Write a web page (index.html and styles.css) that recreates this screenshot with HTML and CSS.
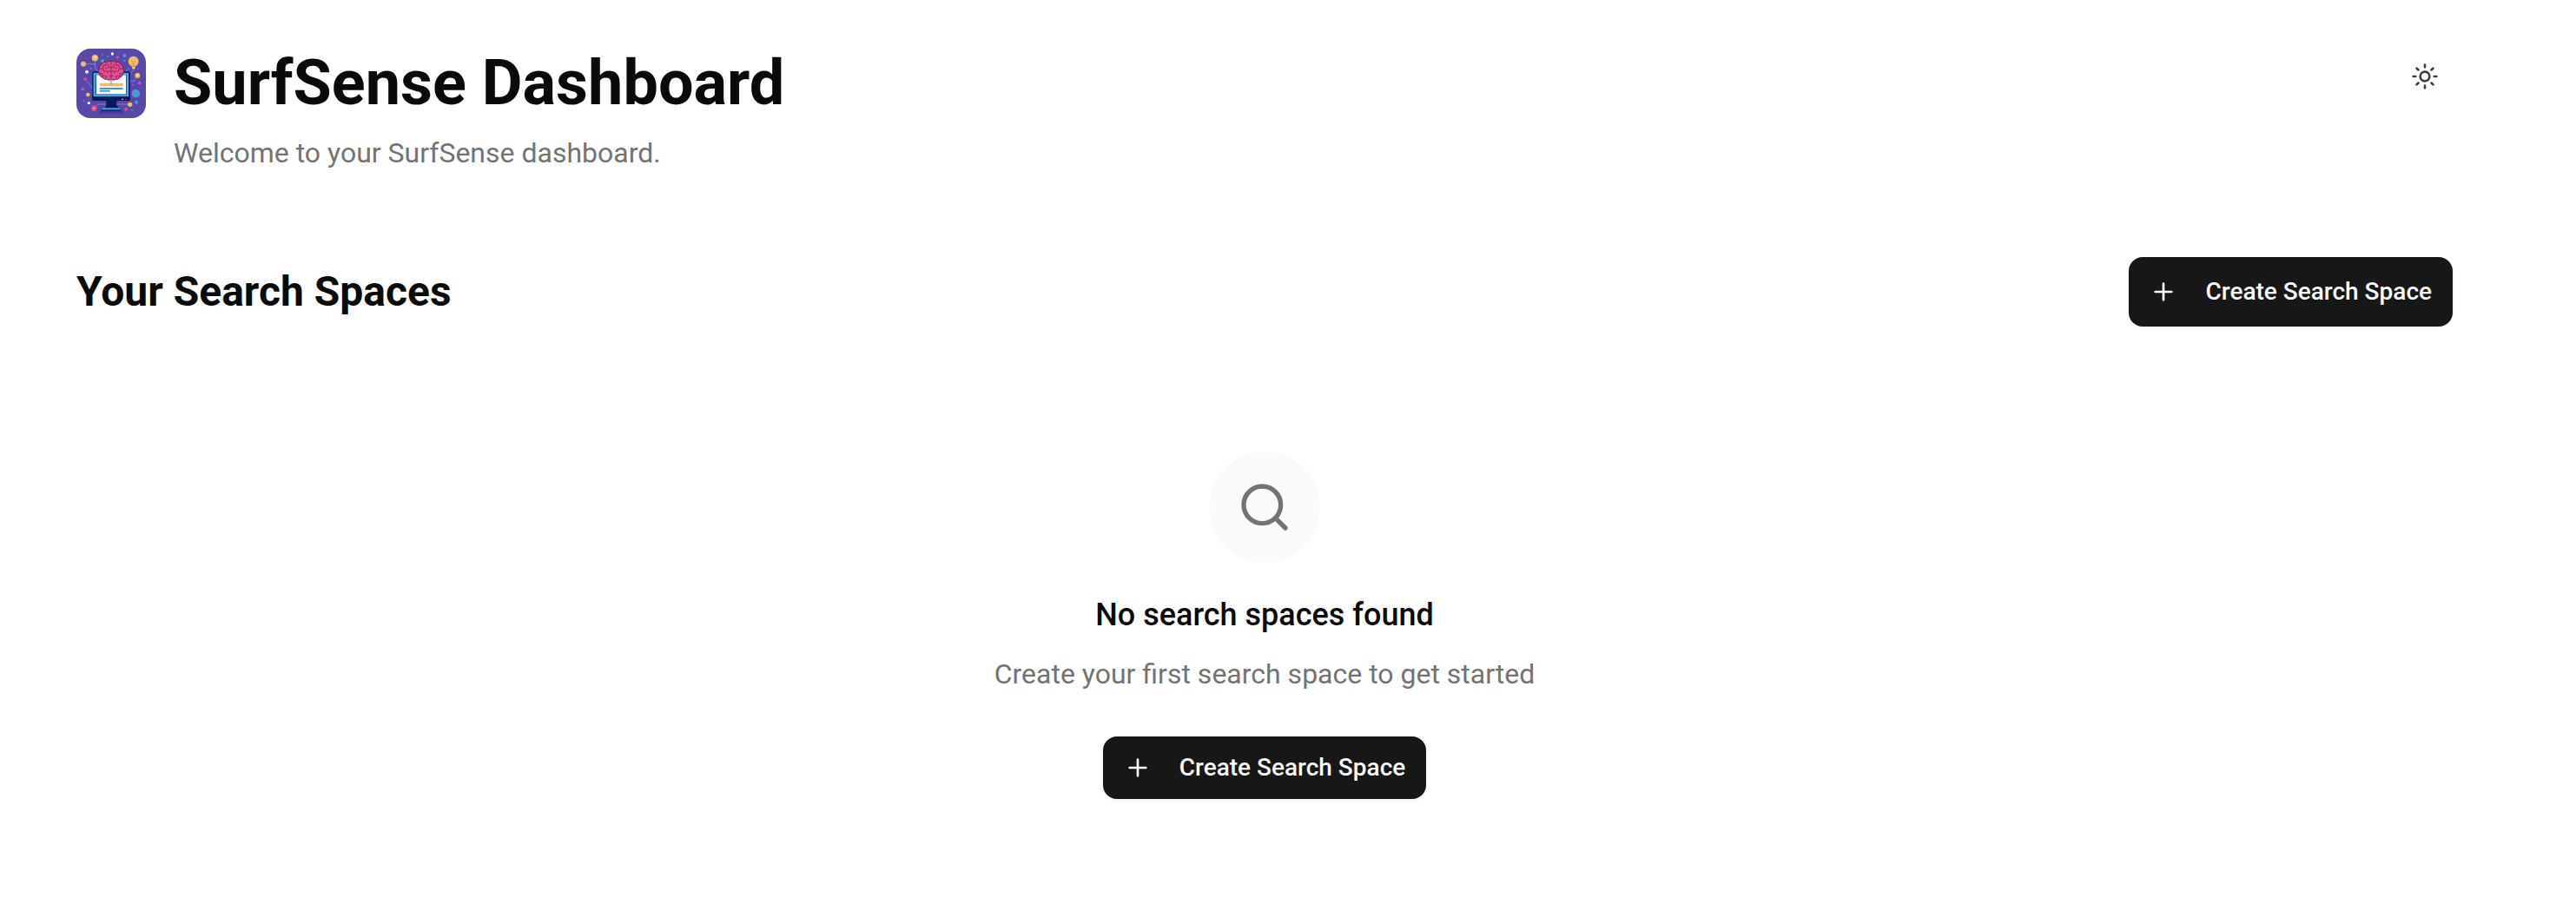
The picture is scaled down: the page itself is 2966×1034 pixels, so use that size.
FILE: index.html
```html
<!DOCTYPE html>
<html lang="en">
<head>
<meta charset="utf-8">
<title>SurfSense Dashboard</title>
<link rel="stylesheet" href="styles.css">
</head>
<body>
<main class="page">
  <header class="header">
    <div class="brand">
      <svg class="logo" viewBox="24 24 240 240" aria-hidden="true">
        <rect x="24" y="24" width="240" height="240" fill="#5748a9"/>
        <g fill="none" stroke="#a99bd8" stroke-width="2">
          <path d="M48 77h40V56M88 77v14l12 12M54 129l24 30M207 90l-16 16M221 88v10l-9 11M235 117l-12 19h-14M92 222l8-6h104"/>
        </g>
        <g fill="#efbd5f">
          <circle cx="48" cy="77" r="9"/><circle cx="88" cy="56" r="11"/><circle cx="221" cy="68" r="18"/>
          <circle cx="235" cy="117" r="9"/><circle cx="64" cy="183" r="7"/><circle cx="209" cy="217" r="8"/>
        </g>
        <path d="M213 82h16l-3 10h-9z" fill="#ed9c43"/>
        <path d="M215 68l6 5 6-5M221 73v12" fill="none" stroke="#e98d35" stroke-width="3"/>
        <path d="M217 89h9v5h-9z" fill="#f4ddc1"/>
        <circle cx="90" cy="53" r="5" fill="#f8df9c"/><circle cx="235" cy="115" r="4" fill="#f8df9c"/>
        <g fill="#f8f5ff"><circle cx="148" cy="42" r="5"/><circle cx="60" cy="104" r="6"/><circle cx="67" cy="212" r="5"/></g>
        <g fill="#429fd5">
          <circle cx="190" cy="48" r="6"/><circle cx="114" cy="67" r="6"/><circle cx="231" cy="209" r="6"/><circle cx="229" cy="179" r="14"/>
          <circle cx="74" cy="93" r="3"/><circle cx="132" cy="51" r="3"/><circle cx="190" cy="65" r="3"/><circle cx="49" cy="203" r="3"/><circle cx="216" cy="236" r="3"/>
        </g>
        <g fill="#d8508e">
          <path d="M166 48l6 6-6 6-6-6zM54 122l7 7-7 7-7-7zM46 157l7 7-7 7-7-7zM242 136l7 7-7 7-7-7zM195 226l7 7-7 7-7-7z"/>
          <circle cx="114" cy="45" r="3"/><circle cx="57" cy="56" r="2"/><circle cx="219" cy="149" r="3"/><circle cx="238" cy="95" r="2"/>
        </g>
        <circle cx="85" cy="230" r="10" fill="#d94b83"/><circle cx="85" cy="230" r="4" fill="#f2a85d"/>
        <rect x="102" y="241" width="84" height="6" rx="3" fill="#483394"/>
        <path d="M127 200h36v20l8 9h-48l4-9z" fill="#071b5b"/>
        <rect x="78" y="102" width="132" height="102" rx="8" fill="#15266f"/>
        <path d="M78 190h132v6q0 8-8 8H86q-8 0-8-8z" fill="#0a1958"/>
        <rect x="83" y="108" width="121" height="81" rx="2" fill="#49b0e4"/>
        <rect x="89" y="113" width="109" height="71" fill="#2264a7"/>
        <rect x="93" y="115" width="102" height="66" fill="#fbfaff"/>
        <rect x="105" y="143" width="80" height="11" rx="2" fill="#efbd5f"/>
        <rect x="104" y="159" width="80" height="6" fill="#369ad2"/>
        <rect x="104" y="168" width="36" height="5" fill="#369ad2"/>
        <rect x="109" y="229" width="70" height="11" rx="4" fill="#142c76"/>
        <rect x="111" y="229" width="66" height="6" rx="3" fill="#419dd4"/>
        <circle cx="183" cy="199" r="2.5" fill="#f1df91"/><circle cx="194" cy="199" r="2" fill="#d8508e"/>
        <path d="M144 69q-8-5-16 1-12-2-16 7-10 4-9 15-6 9 0 17 0 12 11 15 7 8 16 6 8 6 14 0 7 6 15 0 9 2 15-6 11-4 11-15 6-8 0-17 1-11-9-15-5-9-16-7-8-6-16-1z" fill="#e34e8c" stroke="#712051" stroke-width="3"/>
        <path d="M144 70v60M127 71v11h-11v9M104 94h14v8h12M103 110h10v9h14v8M134 77v12h10M132 110v-8h12M161 71v11h11v9M184 94h-14v8h-12M185 110h-10v9h-14v8M154 77v12h-10M156 110v-8h-12M124 91h8M156 91h8M137 118h14" fill="none" stroke="#8e2861" stroke-width="3"/>
        <path d="M142 130h4v20h-4z" fill="#65aeca"/>
      </svg>
      <div class="brand-text">
        <h1 class="title">SurfSense Dashboard</h1>
        <p class="muted">Welcome to your SurfSense dashboard.</p>
      </div>
    </div>
    <button class="theme-toggle" aria-label="Toggle theme">
      <svg class="icon" viewBox="0 0 24 24"><circle cx="12" cy="12" r="4"/><path d="M12 2v2M12 20v2M4.93 4.93l1.41 1.41M17.66 17.66l1.41 1.41M2 12h2M20 12h2M6.34 17.66l-1.41 1.41M19.07 4.93l-1.41 1.41"/></svg>
    </button>
  </header>
  <section class="toolbar">
    <h2 class="section-title">Your Search Spaces</h2>
    <button class="button button-tall">
      <svg class="icon" viewBox="0 0 24 24"><path d="M5 12h14M12 5v14"/></svg>
      <span>Create Search Space</span>
    </button>
  </section>
  <section class="empty">
    <div class="empty-icon">
      <svg class="icon icon-large" viewBox="0 0 24 24"><circle cx="11" cy="11" r="8"/><path d="m21 21-4.3-4.3"/></svg>
    </div>
    <h3 class="empty-title">No search spaces found</h3>
    <p class="muted empty-copy">Create your first search space to get started</p>
    <button class="button">
      <svg class="icon" viewBox="0 0 24 24"><path d="M5 12h14M12 5v14"/></svg>
      <span>Create Search Space</span>
    </button>
  </section>
</main>
</body>
</html>
```
FILE: styles.css
```css
* {
  box-sizing: border-box;
  margin: 0;
}

body {
  background: #fff;
  color: #0a0a0a;
  font-family: Roboto, "Liberation Sans", sans-serif;
  -webkit-font-smoothing: antialiased;
}

.page {
  width: 2912px;
  padding: 56px 88px;
}

.header,
.toolbar {
  display: flex;
  justify-content: space-between;
}

.header {
  align-items: flex-start;
}

.brand {
  display: flex;
  gap: 32px;
}

.logo {
  width: 80px;
  height: 80px;
  border-radius: 16px;
}

.brand-text {
  display: flex;
  flex-direction: column;
  gap: 16px;
}

.title {
  font-size: 72px;
  line-height: 80px;
  font-weight: 700;
}

.muted {
  color: #737373;
  font-size: 32px;
  line-height: 48px;
}

.icon {
  width: 32px;
  height: 32px;
  flex: none;
  fill: none;
  stroke: currentColor;
  stroke-width: 2;
  stroke-linecap: round;
  stroke-linejoin: round;
}

.icon-large {
  width: 64px;
  height: 64px;
}

.theme-toggle {
  display: flex;
  align-items: center;
  justify-content: center;
  width: 64px;
  height: 64px;
  padding: 0;
  border: 0;
  background: none;
  color: #404040;
}

.toolbar {
  align-items: center;
  margin-top: 96px;
}

.section-title {
  font-size: 48px;
  line-height: 64px;
  font-weight: 700;
}

.button {
  display: flex;
  align-items: center;
  gap: 32px;
  height: 72px;
  padding: 0 24px;
  border: 0;
  border-radius: 16px;
  background: #171717;
  color: #fafafa;
  font: 500 28px/40px Roboto, "Liberation Sans", sans-serif;
  white-space: nowrap;
  box-shadow: 0 2px 4px rgba(0, 0, 0, 0.05);
}

.button-tall {
  height: 80px;
}

.empty {
  display: flex;
  flex-direction: column;
  align-items: center;
  margin-top: 144px;
}

.empty-icon {
  display: flex;
  align-items: center;
  justify-content: center;
  width: 128px;
  height: 128px;
  border-radius: 50%;
  background: #fafafa;
  color: #737373;
}

.empty-title {
  margin-top: 32px;
  font-size: 36px;
  line-height: 56px;
  font-weight: 500;
}

.empty-copy {
  margin: 16px 0 48px;
}
```
